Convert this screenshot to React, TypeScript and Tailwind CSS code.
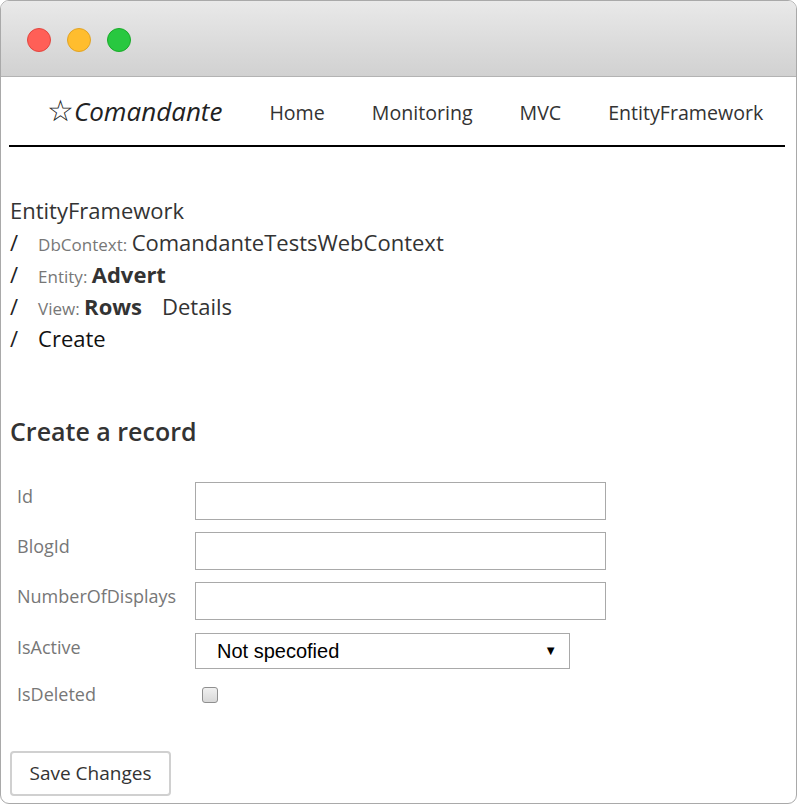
import React from "react";

const FONT = { fontFamily: '"Open Sans", "Noto Sans", sans-serif' };

const fields = ["Id", "BlogId", "NumberOfDisplays"];

function TrafficLights() {
  return (
    <div className="flex gap-4 pl-[26px] pt-[27px]">
      <span className="h-6 w-6 rounded-full border border-[#e2463f] bg-[#ff5f57]" />
      <span className="h-6 w-6 rounded-full border border-[#e1a325] bg-[#ffbd2e]" />
      <span className="h-6 w-6 rounded-full border border-[#1aab29] bg-[#28c840]" />
    </div>
  );
}

function Nav() {
  return (
    <nav className="ml-[8px] mr-[11px] flex h-[70px] items-center border-b-2 border-black pl-[38px]">
      <a href="#" className="flex items-baseline text-[26px] italic text-[#222]">
        <span className="text-[30px] not-italic leading-none" style={{ fontFamily: '"DejaVu Sans", sans-serif' }}>
          ☆
        </span>
        <span>Comandante</span>
      </a>
      <ul className="ml-[47px] flex gap-[47px] pt-1 text-[19.6px] text-[#333]">
        <li>Home</li>
        <li>Monitoring</li>
        <li>MVC</li>
        <li>EntityFramework</li>
      </ul>
    </nav>
  );
}

function Crumb({ children }: { children: React.ReactNode }) {
  return (
    <div className="flex h-8 items-baseline gap-5">
      <span className="text-[#222]">/</span>
      <span>{children}</span>
    </div>
  );
}

export default function App() {
  return (
    <div className="h-[804px] w-[797px] bg-white" style={FONT}>
      <div className="flex h-full flex-col overflow-hidden rounded-[9px] border border-[#a9a9a9]">
        <div className="h-[76px] shrink-0 border-b border-[#b3b3b3] bg-gradient-to-b from-[#e9e9e9] to-[#d1d1d1]">
          <TrafficLights />
        </div>
        <Nav />

        <div className="px-[9px] pt-[47px] text-[22px] leading-8 text-[#333]">
          <div className="h-8">EntityFramework</div>
          <Crumb>
            <span className="text-[17px] text-[#777]">DbContext: </span>ComandanteTestsWebContext
          </Crumb>
          <Crumb>
            <span className="text-[17px] text-[#777]">Entity: </span>
            <b className="font-bold">Advert</b>
          </Crumb>
          <Crumb>
            <span className="text-[17px] text-[#777]">View: </span>
            <b className="font-bold">Rows</b>
            <span className="ml-5">Details</span>
          </Crumb>
          <Crumb>
            <span className="text-[#111]">Create</span>
          </Crumb>
        </div>

        <h2 className="px-[9px] pt-[61px] text-[25px] font-semibold leading-8 text-[#333]">
          Create a record
        </h2>

        <form className="flex flex-col px-4 pt-[35px]" onSubmit={(e) => e.preventDefault()}>
          {fields.map((f, i) => (
            <div key={f} className={`flex ${i === fields.length - 1 ? "mb-[13px]" : "mb-3"}`}>
              <label className="w-[178px] pt-[1px] text-[18px] text-[#777]">{f}</label>
              <input type="text" className="h-[38px] w-[411px] border border-[#a9a9a9] bg-white" />
            </div>
          ))}
          <div className="mb-3 flex">
            <label className="w-[178px] pt-[1px] text-[18px] text-[#777]">IsActive</label>
            <div className="flex h-9 w-[375px] items-center justify-between border border-[#a9a9a9] pl-[21px] pr-3 text-[20px] text-black" style={{ fontFamily: '"Liberation Sans", Arial, sans-serif' }}>
              <span>Not specofied</span>
              <span className="text-[13px]">▼</span>
            </div>
          </div>
          <div className="flex items-center">
            <label className="w-[178px] text-[18px] text-[#777]">IsDeleted</label>
            <span className="ml-[7px] h-4 w-4 rounded-[3px] border border-[#8f8f8f] bg-gradient-to-b from-[#f0f0f0] to-[#d8d8d8]" />
          </div>
          <div className="pt-[43px]">
            <button type="submit" className="-ml-[7px] h-[45px] w-[161px] rounded-[4px] border-2 border-[#d0d0d0] bg-white text-[19px] text-[#333]">
              Save Changes
            </button>
          </div>
        </form>
      </div>
    </div>
  );
}
